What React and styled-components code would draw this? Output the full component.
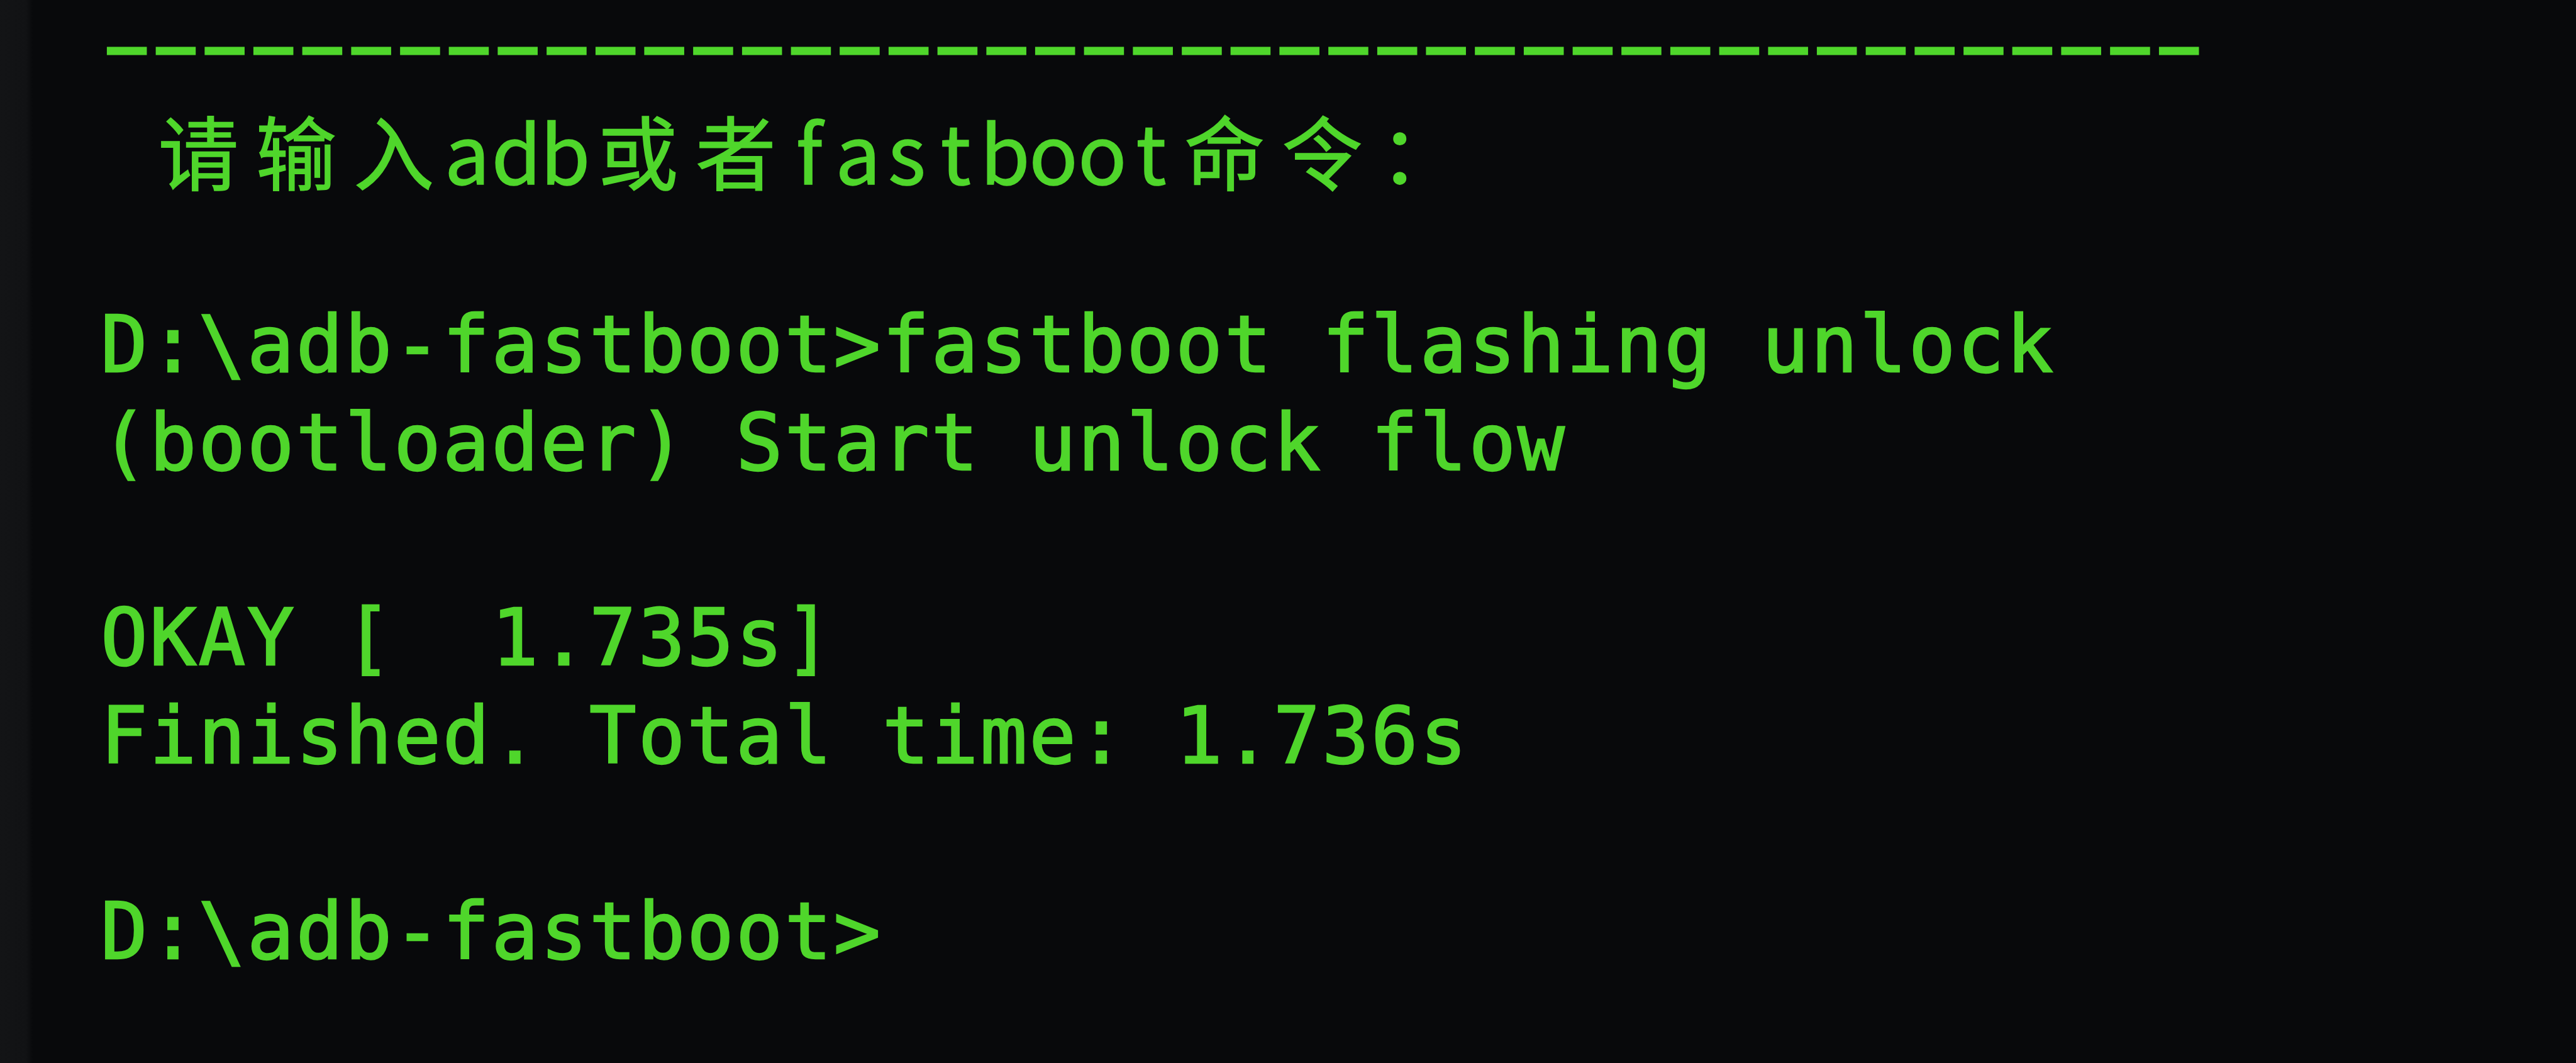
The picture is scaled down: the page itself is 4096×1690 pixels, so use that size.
import styled, { createGlobalStyle } from 'styled-components'

// 터미널 한 칸 = 77.7px, 한 줄 = 155.4px
const CELL = 77.7
const ROW = 155.4
const ADVANCE = 0.6021 // DejaVu Sans Mono 글자 폭 (em)

const GlobalStyle = createGlobalStyle`
   html, body {
      margin: 0;
      background: #08090b;
   }
`

const Screen = styled.main`
   width: 4096px;
   height: 1690px;
   box-sizing: border-box;
   padding: 5px 0 0 160px;
   overflow: hidden;
   background: linear-gradient(to right, #131416 0, #111214 42px, #08090b 52px);
   color: #4fd62b;
   font-family: 'DejaVu Sans Mono', 'Liberation Mono', monospace;
   font-size: 124px;
   letter-spacing: ${CELL - 124 * ADVANCE}px;
   line-height: ${ROW}px;
   white-space: pre;
   -webkit-text-stroke: 2.5px #4fd62b;
`

const Line = styled.div`
   height: ${ROW}px;
`

// 구분선: '-' 문자를 가로로 늘려서 칸마다 굵은 대시처럼 보이게
const DASH_SCALE = 1.84
const RuleLine = styled(Line)`
   margin-left: -27px;
   letter-spacing: ${CELL / DASH_SCALE - 124 * ADVANCE}px;
   transform: translateY(-10px) scaleX(${DASH_SCALE});
   transform-origin: left center;
   -webkit-text-stroke: 3px #4fd62b;
`

// 중국어가 섞인 줄은 칸 단위로 맞춘다 (한자 = 2칸)
const CjkLine = styled(Line)`
   font-family: 'Noto Sans CJK SC', 'Noto Sans', sans-serif;
   font-size: 128px;
   letter-spacing: 0;
   -webkit-text-stroke: 1.5px #4fd62b;
`

const Cell = styled.span`
   display: inline-block;
   width: ${(props) => (props.$wide ? CELL * 2 : CELL)}px;
   text-align: center;
`

const prompt = ' 请输入adb或者fastboot命令：'

const isWide = (ch) => /[\u3000-\u9fff\uff00-\uffef]/.test(ch)

function App() {
   return (
      <>
         <GlobalStyle />
         <Screen>
            <RuleLine>{'-'.repeat(43)}</RuleLine>
            <CjkLine>
               {[...prompt].map((ch, i) => (
                  <Cell key={i} $wide={isWide(ch)}>
                     {ch}
                  </Cell>
               ))}
            </CjkLine>
            <Line />
            <Line>D:\adb-fastboot&gt;fastboot flashing unlock</Line>
            <Line>(bootloader) Start unlock flow</Line>
            <Line />
            <Line>OKAY [  1.735s]</Line>
            <Line>Finished. Total time: 1.736s</Line>
            <Line />
            <Line>D:\adb-fastboot&gt;</Line>
         </Screen>
      </>
   )
}

export default App
